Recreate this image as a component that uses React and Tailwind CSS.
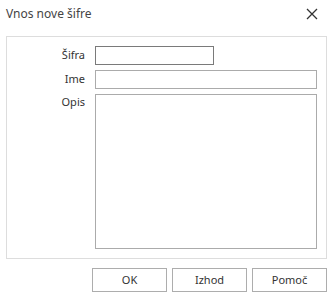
import React from 'react';

const font = { fontFamily: '"Noto Sans", "Open Sans", sans-serif' };

export default function App() {
  return (
    <div className="w-[330px] h-[298px] bg-white text-[#333333] relative" style={font}>
      {/* Title bar */}
      <div className="h-[30px] flex items-center justify-between pl-[6px] pr-[12px]">
        <span className="text-[12px] text-[#444444] leading-none -mt-[2px]">Vnos nove šifre</span>
        <svg width="12" height="12" viewBox="0 0 12 12" className="-mt-[2px]">
          <path d="M1 1 L11 11 M11 1 L1 11" stroke="#333" strokeWidth="1.3" />
        </svg>
      </div>

      {/* Form panel */}
      <div className="ml-[6px] w-[321px] mt-[6px] h-[223px] border border-[#dddddd] pt-[9px] pr-[9px] flex flex-col gap-[5px]">
        <div className="flex items-center h-[19px]">
          <label className="w-[88px] shrink-0 text-right text-[11px] pr-[10px]">Šifra</label>
          <input className="w-[119px] h-[19px] border border-[#7a7a7a] outline-none" />
        </div>
        <div className="flex items-center h-[19px]">
          <label className="w-[88px] shrink-0 text-right text-[11px] pr-[10px]">Ime</label>
          <input className="flex-1 min-w-0 h-[19px] border border-[#ababab] outline-none" />
        </div>
        <div className="flex items-start">
          <label className="w-[88px] shrink-0 text-right text-[11px] pr-[10px] leading-[16px]">Opis</label>
          <textarea className="flex-1 min-w-0 h-[155px] border border-[#ababab] outline-none resize-none" />
        </div>
      </div>

      {/* Buttons */}
      <div className="flex justify-end gap-[5px] pr-[3px] mt-[9px]">
        <button className="w-[75px] h-[24px] border border-[#adadad] bg-white text-[11px]">OK</button>
        <button className="w-[75px] h-[24px] border border-[#adadad] bg-white text-[11px]">Izhod</button>
        <button className="w-[75px] h-[24px] border border-[#adadad] bg-white text-[11px]">Pomoč</button>
      </div>
    </div>
  );
}
